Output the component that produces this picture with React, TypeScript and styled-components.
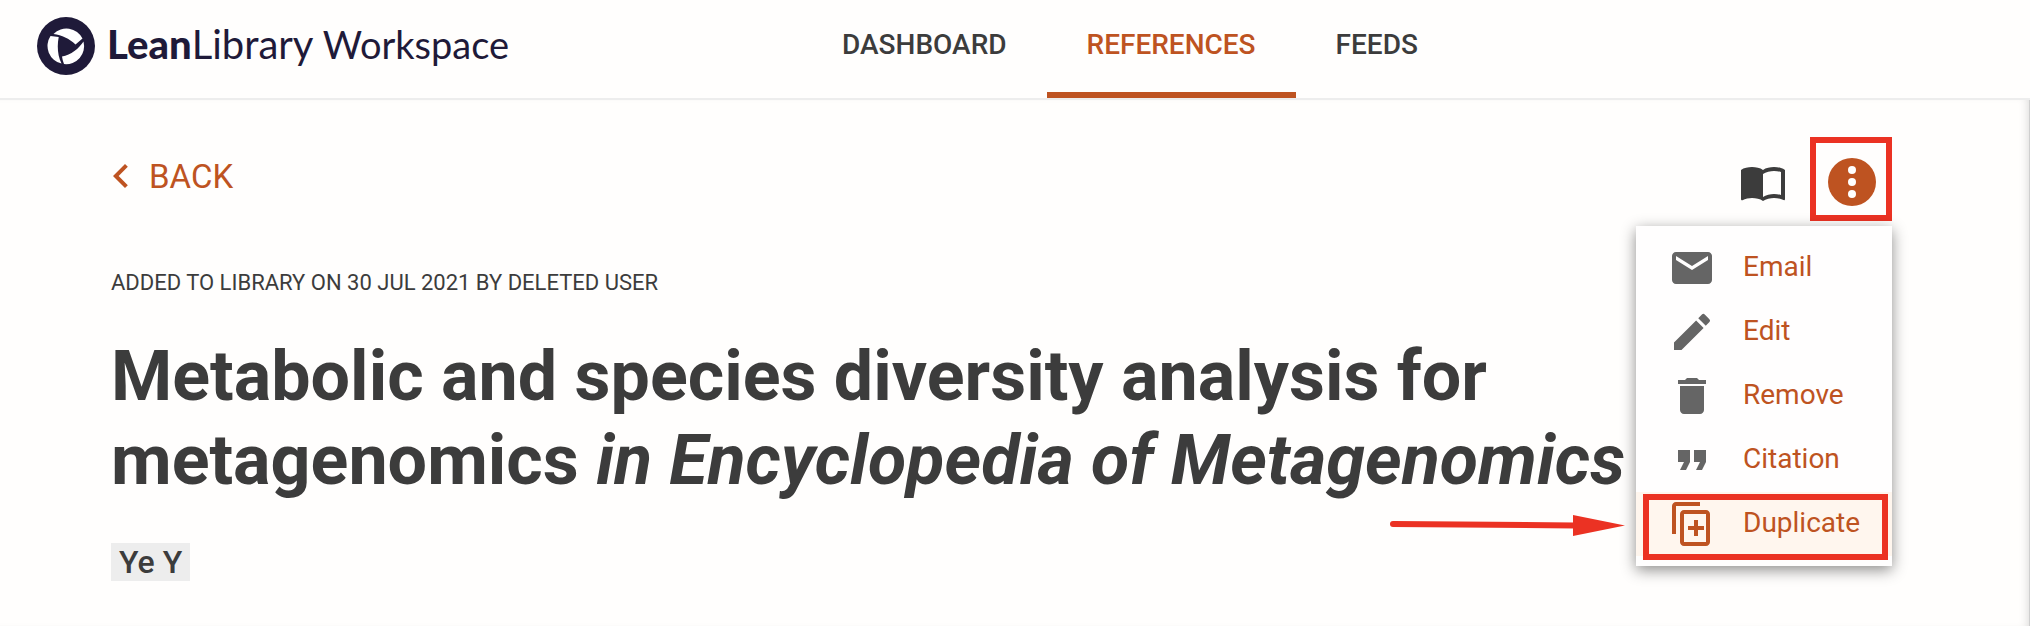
import React from 'react';
import styled, { createGlobalStyle, css } from 'styled-components';
import { MdChevronLeft, MdDelete, MdEdit, MdEmail, MdFormatQuote } from 'react-icons/md';

const color = {
  page: '#fffefd',
  text: '#3c3c3c',
  accent: '#be5321',
  navy: '#1f1a39',
  grey: '#656565',
  line: '#ededed',
  mark: '#eb3223',
};

const GlobalStyle = createGlobalStyle`
  *, *::before, *::after { box-sizing: border-box; }
  body {
    margin: 0;
    background: ${color.page};
    color: ${color.text};
    font-family: Roboto, "Liberation Sans", sans-serif;
  }
`;

const Page = styled.div`
  display: flex;
  flex-direction: column;
  min-height: 100vh;
`;

const Header = styled.header`
  display: flex;
  height: 100px;
  padding-left: 37px;
  border-bottom: 2px solid ${color.line};
`;

const Brand = styled.a`
  display: flex;
  align-items: center;
  gap: 12px;
  width: 765px;
  padding-bottom: 6px;
  color: ${color.navy};
  text-decoration: none;
  white-space: nowrap;
`;

const BrandName = styled.span`
  padding-bottom: 4px;
  font: 400 40px/48px Lato, "Open Sans", sans-serif;

  b { font-weight: 900; }
`;

const Product = styled.span`
  font-size: 38px;
`;

const Nav = styled.nav`
  display: flex;
`;

const NavLink = styled.a<{ $active?: boolean }>`
  padding: 27px 40px 0;
  border-bottom: 6px solid ${p => (p.$active ? color.accent : 'transparent')};
  color: ${p => (p.$active ? color.accent : color.text)};
  font-size: 28px;
  font-weight: 500;
  line-height: 36px;
  text-decoration: none;
`;

const Main = styled.main`
  flex: 1;
  padding: 37px 138px 45px 111px;
  box-shadow: inset -1px 0 0 #cfcfcf, inset -8px 0 10px -6px rgba(0, 0, 0, 0.15);
`;

const Toolbar = styled.div`
  display: flex;
  justify-content: space-between;
  height: 84px;
`;

const BackLink = styled.a`
  display: flex;
  align-items: center;
  align-self: flex-start;
  height: 78px;
  margin-left: -14px;
  gap: 4px;
  color: ${color.accent};
  font-size: 33px;
  text-decoration: none;
`;

const Actions = styled.div`
  position: relative;
  display: flex;
  gap: 23px;
`;

const IconButton = styled.button`
  display: flex;
  padding: 0;
  border: 0;
  background: none;
  color: ${color.text};
`;

const marked = css`
  border: 6px solid ${color.mark};
`;

const Action = styled.div`
  padding: 21px 0 15px;
`;

const MarkedAction = styled.div`
  ${marked}
  padding: 15px 10px 9px 12px;
`;

const Menu = styled.ul`
  position: absolute;
  z-index: 1;
  top: 89px;
  right: 0;
  width: 256px;
  margin: 0;
  padding: 10px 0;
  list-style: none;
  background: #fffefe;
  box-shadow: 0 4px 14px rgba(0, 0, 0, 0.45);
`;

const MenuItem = styled.li<{ $active?: boolean }>`
  position: relative;
  background: ${p => (p.$active ? '#fff6ee' : 'transparent')};
`;

const MenuButton = styled.button<{ $active?: boolean }>`
  display: flex;
  align-items: center;
  gap: 27px;
  width: 100%;
  height: 64px;
  padding: 0 0 0 32px;
  border: 0;
  background: none;
  color: ${color.accent};
  font: 400 28px/36px Roboto, sans-serif;

  svg { color: ${p => (p.$active ? color.accent : color.grey)}; }
  span { padding-bottom: 2px; }
`;

const MarkBox = styled.span`
  ${marked}
  position: absolute;
  inset: 2px 4px -4px 7px;
  pointer-events: none;
`;

const Arrow = styled.svg`
  position: absolute;
  top: 21px;
  right: 266px;
`;

const Added = styled.p`
  margin: 48px 0 0;
  font-size: 22px;
  line-height: 28px;
`;

const Title = styled.h1`
  max-width: 1530px;
  margin: 37px 0 0;
  font-size: 70px;
  font-weight: 700;
  line-height: 84px;
`;

const Author = styled.a`
  display: inline-block;
  margin-top: 41px;
  padding: 0 8px;
  background: ${color.line};
  color: ${color.text};
  font-size: 32px;
  font-weight: 500;
  line-height: 38px;
  text-decoration: none;
`;

const LogoMark = () => (
  <svg width="58" height="58" viewBox="0 0 58 58" aria-hidden="true">
    <circle cx="29" cy="29" r="29" fill={color.navy} />
    <g fill="#fff">
      <path d="M16.500 17A18 18 0 0 1 45.500 21.500L38.500 27.500C32 21.500 25 18 16.500 17Z" />
      <path d="M13.500 19L21.700 20C20 29 20.500 38 24.500 46.500A18 18 0 0 1 13.500 19Z" />
      <path d="M46.500 24.500C42 31.500 34 38 25 39.500C25.300 42 26 44.500 27 47A18 18 0 0 0 46.500 24.500Z" />
    </g>
  </svg>
);

const BookIcon = () => (
  <svg width="48" height="48" viewBox="0 0 24 24" fill="currentColor" aria-hidden="true">
    <path d="M21 5c-1.110-.35-2.330-.5-3.500-.5-1.950 0-4.050.4-5.500 1.500-1.450-1.100-3.550-1.500-5.500-1.500S2.450 4.900 1 6v14.650c0 .25.25.5.5.5.1 0 .15-.05.25-.05C3.100 20.450 5.050 20 6.500 20c1.950 0 4.050.4 5.500 1.500 1.350-.85 3.800-1.500 5.500-1.500 1.650 0 3.350.3 4.750 1.050.1.050.15.050.25.050.25 0 .5-.25.5-.5V6c-.6-.45-1.250-.75-2-1zm0 13.500c-1.100-.35-2.300-.5-3.500-.5-1.700 0-4.150.65-5.500 1.500V8c1.350-.85 3.800-1.500 5.500-1.500 1.200 0 2.400.15 3.500.5v11.500z" />
  </svg>
);

const MoreIcon = () => (
  <svg width="48" height="48" viewBox="0 0 48 48" aria-hidden="true">
    <circle cx="24" cy="24" r="24" fill={color.accent} />
    <g fill="#fff">
      <circle cx="24" cy="12" r="4" />
      <circle cx="24" cy="24" r="4" />
      <circle cx="24" cy="36" r="4" />
    </g>
  </svg>
);

const DuplicateIcon = () => (
  <svg width="48" height="48" viewBox="0 0 24 24" fill="currentColor" aria-hidden="true">
    <path d="M16 1H4c-1.100 0-2 .9-2 2v14h2V3h12V1zm3 4H8c-1.100 0-2 .9-2 2v14c0 1.100.9 2 2 2h11c1.100 0 2-.9 2-2V7c0-1.100-.9-2-2-2zm0 16H8V7h11v14z" />
    <path d="M13 10h2v3h3v2h-3v3h-2v-3h-3v-2h3z" />
  </svg>
);

const menuItems = [
  { label: 'Email', icon: <MdEmail size={48} /> },
  { label: 'Edit', icon: <MdEdit size={48} /> },
  { label: 'Remove', icon: <MdDelete size={48} /> },
  { label: 'Citation', icon: <MdFormatQuote size={48} /> },
  { label: 'Duplicate', icon: <DuplicateIcon />, active: true },
];

export default function App() {
  return (
    <Page>
      <GlobalStyle />
      <Header>
        <Brand href="#">
          <LogoMark />
          <BrandName><b>Lean</b>Library <Product>Workspace</Product></BrandName>
        </Brand>
        <Nav>
          <NavLink href="#dashboard">DASHBOARD</NavLink>
          <NavLink href="#references" $active>REFERENCES</NavLink>
          <NavLink href="#feeds">FEEDS</NavLink>
        </Nav>
      </Header>
      <Main>
        <Toolbar>
          <BackLink href="#back"><MdChevronLeft size={48} />BACK</BackLink>
          <Actions>
            <Action>
              <IconButton aria-label="Read"><BookIcon /></IconButton>
            </Action>
            <MarkedAction>
              <IconButton aria-label="More actions" aria-expanded="true"><MoreIcon /></IconButton>
            </MarkedAction>
            <Menu>
              {menuItems.map(({ label, icon, active }) => (
                <MenuItem key={label} $active={active}>
                  <MenuButton $active={active}>{icon}<span>{label}</span></MenuButton>
                  {active && <MarkBox />}
                  {active && (
                    <Arrow width="238" height="24" viewBox="0 0 238 24" fill={color.mark} aria-hidden="true">
                      <path d="M5 11L187 12.500" stroke={color.mark} strokeWidth="6" strokeLinecap="round" />
                      <path d="M185 2L237 12.500L185 23Z" />
                    </Arrow>
                  )}
                </MenuItem>
              ))}
            </Menu>
          </Actions>
        </Toolbar>
        <Added>ADDED TO LIBRARY ON 30 JUL 2021 BY DELETED USER</Added>
        <Title>
          Metabolic and species diversity analysis for metagenomics <em>in Encyclopedia of Metagenomics</em>
        </Title>
        <Author href="#author">Ye Y</Author>
      </Main>
    </Page>
  );
}
